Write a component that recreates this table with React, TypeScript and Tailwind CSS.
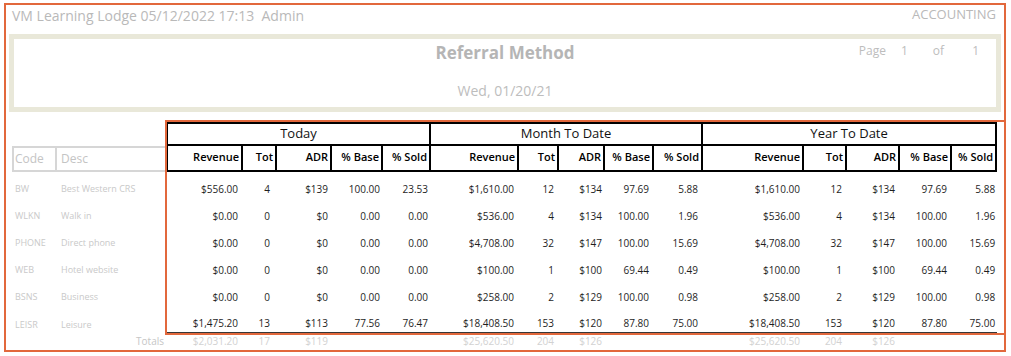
const cols = [
  { w: 'w-[77px]', pr: 'pr-[5px]' },
  { w: 'w-[34px]', pr: 'pr-[7px]' },
  { w: 'w-[55px]', pr: 'pr-[4px]' },
  { w: 'w-[51px]', pr: 'pr-[3px]' },
  { w: 'w-[48px]', pr: 'pr-[3px]' },
  { w: 'w-[88px]', pr: 'pr-[5px]' },
  { w: 'w-[40px]', pr: 'pr-[5px]' },
  { w: 'w-[46px]', pr: 'pr-[3px]' },
  { w: 'w-[49px]', pr: 'pr-[5px]' },
  { w: 'w-[49px]', pr: 'pr-[5px]' },
  { w: 'w-[101px]', pr: 'pr-[4px]' },
  { w: 'w-[43px]', pr: 'pr-[5px]' },
  { w: 'w-[53px]', pr: 'pr-[5px]' },
  { w: 'w-[52px]', pr: 'pr-[5px]' },
  { w: 'w-[45px]', pr: 'pr-[2px]' },
];

const headers = ['Revenue', 'Tot', 'ADR', '% Base', '% Sold'];
const groups = ['Today', 'Month To Date', 'Year To Date'];

const zeros = ['$0.00', '0', '$0', '0.00', '0.00'];

const rows = [
  {
    code: 'BW',
    desc: 'Best Western CRS',
    today: ['$556.00', '4', '$139', '100.00', '23.53'],
    mtd: ['$1,610.00', '12', '$134', '97.69', '5.88'],
  },
  { code: 'WLKN', desc: 'Walk in', today: zeros, mtd: ['$536.00', '4', '$134', '100.00', '1.96'] },
  { code: 'PHONE', desc: 'Direct phone', today: zeros, mtd: ['$4,708.00', '32', '$147', '100.00', '15.69'] },
  { code: 'WEB', desc: 'Hotel website', today: zeros, mtd: ['$100.00', '1', '$100', '69.44', '0.49'] },
  { code: 'BSNS', desc: 'Business', today: zeros, mtd: ['$258.00', '2', '$129', '100.00', '0.98'] },
  {
    code: 'LEISR',
    desc: 'Leisure',
    today: ['$1,475.20', '13', '$113', '77.56', '76.47'],
    mtd: ['$18,408.50', '153', '$120', '87.80', '75.00'],
  },
];

const totals = [
  '$2,031.20', '17', '$119', '', '',
  '$25,620.50', '204', '$126', '', '',
  '$25,620.50', '204', '$126', '', '',
];

export default function App() {
  return (
    <div className="relative w-[1011px] h-[356px] bg-white pt-[3px] pl-[4px] font-['Open_Sans',sans-serif]">
      <div className="w-[1002px] h-[349px] border-2 border-[#e2683c]">
        {/* top line */}
        <div className="flex h-[20px] items-center justify-between pl-[6px] pr-[8px] text-[#b9b9b9]">
          <span className="text-[14px] whitespace-pre">VM Learning Lodge 05/12/2022 17:13  Admin</span>
          <span className="text-[13px]">ACCOUNTING</span>
        </div>

        {/* title box */}
        <div className="ml-[3px] mt-[9px] h-[78px] w-[992px] border-[5px] border-[#e9e8d9] grid grid-cols-[1fr_auto_1fr]">
          <div />
          <div className="flex flex-col items-center pt-[3px]">
            <div className="h-[22px] leading-[22px] text-[17px] font-bold text-[#b5b5b5]">Referral Method</div>
            <div className="mt-[17px] h-[20px] leading-[20px] text-[14px] text-[#bdbdbd]">Wed, 01/20/21</div>
          </div>
          <div className="flex justify-end pr-[17px] pt-[3px] text-[12px] text-[#bdbdbd]">
            <div className="flex h-[18px] items-center">
              <span>Page</span>
              <span className="ml-[15px]">1</span>
              <span className="ml-[25px]">of</span>
              <span className="ml-[28px]">1</span>
            </div>
          </div>
        </div>

        {/* table */}
        <table className="ml-[6px] mt-[10px] w-[985px] table-fixed border-separate border-spacing-0">
          <colgroup>
            <col className="w-[45px]" />
            <col className="w-[109px]" />
            {cols.map((c, i) => (
              <col key={i} className={c.w} />
            ))}
          </colgroup>
          <thead>
            <tr>
              <th className="h-[23px]" />
              <th className="h-[23px]" />
              {groups.map((g, i) => (
                <th
                  key={g}
                  colSpan={5}
                  className={
                    'h-[23px] p-0 border-t-2 border-b-2 border-r-2 border-black text-center align-middle text-[13px] font-medium text-[#111] ' +
                    (i === 0 ? 'border-l-2' : '')
                  }
                >
                  {g}
                </th>
              ))}
            </tr>
            <tr>
              <th className="h-[26px] p-0 pl-[1px] border-2 border-[#d6d6d6] text-left align-middle text-[12px] font-normal text-[#c4c4c4]">
                Code
              </th>
              <th className="h-[26px] p-0 pl-[4px] border-t-2 border-b-2 border-[#d6d6d6] text-left align-middle text-[12px] font-normal text-[#c4c4c4]">
                Desc
              </th>
              {cols.map((c, i) => (
                <th
                  key={i}
                  className={
                    'h-[26px] p-0 pr-[2px] border-b-2 border-r-2 border-black text-right align-middle text-[11px] font-semibold text-black whitespace-nowrap ' +
                    (i === 0 ? 'border-l-2' : '')
                  }
                >
                  {headers[i % 5]}
                </th>
              ))}
            </tr>
            <tr>
              <th colSpan={17} className="h-[4px] p-0" />
            </tr>
          </thead>
          <tbody>
            {rows.map((r, ri) => {
              const last = ri === rows.length - 1;
              const vals = [...r.today, ...r.mtd, ...r.mtd];
              const h = last ? 'h-[23px] pt-[5px] pb-0' : 'h-[27px] py-0';
              return (
                <tr key={r.code}>
                  <td className={h + ' pl-[3px] pr-0 align-middle text-[9px] text-[#c9c9c9] whitespace-nowrap'}>{r.code}</td>
                  <td className={h + ' pl-[4px] pr-0 align-middle text-[9px] text-[#c9c9c9] whitespace-nowrap'}>{r.desc}</td>
                  {vals.map((v, i) => (
                    <td
                      key={i}
                      className={
                        h +
                        ' pl-0 ' +
                        cols[i].pr +
                        ' text-right align-middle text-[10px] text-[#1e1e1e] whitespace-nowrap ' +
                        (last ? 'border-b-2 border-[#363636]' : '')
                      }
                    >
                      {v}
                    </td>
                  ))}
                </tr>
              );
            })}
            <tr>
              <td colSpan={2} className="h-[16px] p-0 pr-[2px] text-right align-middle text-[10px] text-[#c6c6c6]">
                Totals
              </td>
              {totals.map((v, i) => (
                <td
                  key={i}
                  className={'h-[16px] p-0 pl-0 ' + cols[i].pr + ' text-right align-middle text-[10px] text-[#d2d2d2] whitespace-nowrap'}
                >
                  {v}
                </td>
              ))}
            </tr>
          </tbody>
        </table>
      </div>

      {/* highlight annotation */}
      <div className="pointer-events-none absolute left-[165px] top-[120px] h-[215px] w-[841px] border-2 border-[#e2683c]" />
    </div>
  );
}
